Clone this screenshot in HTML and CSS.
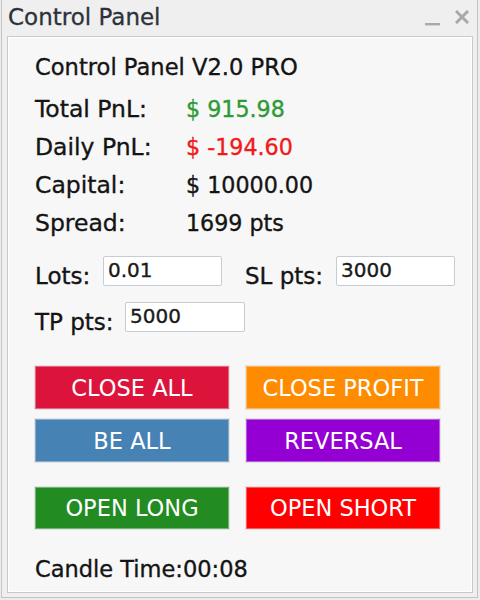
FILE: index.html
```html
<!DOCTYPE html>
<html>
<head>
<meta charset="utf-8">
<link rel="stylesheet" href="styles.css">
</head>
<body>
<div class="window">
  <div class="titlebar">
    <span class="title">Control Panel</span>
    <div class="controls">
      <svg class="ico-min" width="16" height="6" viewBox="0 0 16 6"><rect x="0" y="2" width="15" height="2.4" fill="#a9a9a9"/></svg>
      <svg class="ico-close" width="14" height="14" viewBox="0 0 14 14"><path d="M2 2 L12 12 M12 2 L2 12" stroke="#a9a9a9" stroke-width="3" stroke-linecap="square"/></svg>
    </div>
  </div>
  <div class="panel">
    <div class="heading">Control Panel V2.0 PRO</div>
    <div class="stats">
      <div class="row"><span class="key">Total PnL:</span><span class="val green">$ 915.98</span></div>
      <div class="row"><span class="key">Daily PnL:</span><span class="val red">$ -194.60</span></div>
      <div class="row"><span class="key">Capital:</span><span class="val">$ 10000.00</span></div>
      <div class="row"><span class="key">Spread:</span><span class="val">1699 pts</span></div>
    </div>
    <div class="inputs">
      <div class="irow">
        <span class="lbl lbl-lots">Lots:</span><div class="field f-lots">0.01</div>
        <span class="lbl lbl-sl">SL pts:</span><div class="field f-sl">3000</div>
      </div>
      <div class="irow irow2">
        <span class="lbl lbl-tp">TP pts:</span><div class="field f-tp">5000</div>
      </div>
    </div>
    <div class="buttons">
      <div class="btn b-closeall">CLOSE ALL</div>
      <div class="btn b-closeprofit">CLOSE PROFIT</div>
      <div class="btn b-beall">BE ALL</div>
      <div class="btn b-reversal">REVERSAL</div>
    </div>
    <div class="buttons buttons2">
      <div class="btn b-long">OPEN LONG</div>
      <div class="btn b-short">OPEN SHORT</div>
    </div>
    <div class="candle">Candle Time:00:08</div>
  </div>
</div>
</body>
</html>
```
FILE: styles.css
```css
* { box-sizing: border-box; }
html, body { margin: 0; padding: 0; }
body {
  width: 480px;
  height: 600px;
  background: #ececec;
  font-family: "DejaVu Sans", "Liberation Sans", sans-serif;
  color: #141414;
  overflow: hidden;
}
.window {
  width: 477px;
  height: 598px;
  margin: 0 0 0 1px;
  border: 1px solid #c4c4c4;
  border-top: none;
  background: #efefef;
  display: flex;
  flex-direction: column;
}
.titlebar {
  height: 36px;
  display: flex;
  align-items: center;
  justify-content: space-between;
  padding: 0 8px 0 6px;
}
.title {
  font-size: 23px;
  color: #2d323a;
  line-height: 30px;
  margin-top: -2px;
  -webkit-text-stroke: 0.3px #2d323a;
}
.controls {
  display: flex;
  align-items: center;
  gap: 14px;
  margin-top: -3px;
}
.ico-min { margin-top: 14px; }
.panel {
  margin: 0 4px 4px 5px;
  flex: 1;
  border: 1px solid #c9c9c9;
  box-shadow: inset 0 0 0 1px #ffffff;
  background: #f7f7f7;
  padding: 15px 0 0 27px;
  display: flex;
  flex-direction: column;
  -webkit-text-stroke: 0.35px currentColor;
}
.heading {
  font-size: 22.6px;
  line-height: 30px;
}
.stats {
  margin-top: 8px;
  display: flex;
  flex-direction: column;
}
.row {
  height: 38px;
  line-height: 38px;
  font-size: 22.5px;
  display: flex;
}
.key { width: 151px; font-size: 23.5px; }
.val { font-size: 22.2px; }
.green { color: #2f9a35; }
.red { color: #f01a1a; }
.inputs {
  margin-top: 14px;
  display: flex;
  flex-direction: column;
  gap: 16px;
}
.irow {
  display: flex;
  align-items: center;
  height: 30px;
}
.lbl {
  font-size: 23px;
  line-height: 30px;
  padding-top: 9px;
}
.lbl-lots { width: 68px; }
.lbl-sl { width: 91px; margin-left: 23px; }
.lbl-tp { width: 90px; }
.field {
  height: 30px;
  background: #ffffff;
  border: 1px solid #c6ccd2;
  border-radius: 2px;
  font-size: 20px;
  line-height: 26px;
  padding-left: 4px;
  color: #1a1a1a;
}
.f-lots, .f-sl { width: 119px; }
.f-tp { width: 120px; }
.buttons {
  margin-top: 34px;
  display: grid;
  grid-template-columns: 194px 194px;
  grid-auto-rows: 43px;
  column-gap: 17px;
  row-gap: 10px;
}
.buttons2 {
  margin-top: 25px;
  grid-auto-rows: 42px;
}
.btn {
  color: #ffffff;
  font-size: 22.5px;
  -webkit-text-stroke: 0;
  display: flex;
  align-items: center;
  justify-content: center;
  border: 1px solid rgba(255,255,255,0.35);
  outline: 1px solid rgba(0,0,0,0.08);
}
.b-closeall { background: #dc143c; }
.b-closeprofit { background: #ff8c00; }
.b-beall { background: #4682b4; }
.b-reversal { background: #9400d3; }
.b-long { background: #228b22; }
.b-short { background: #ff0000; }
.candle {
  margin-top: 25px;
  font-size: 22.5px;
  line-height: 30px;
}
```
